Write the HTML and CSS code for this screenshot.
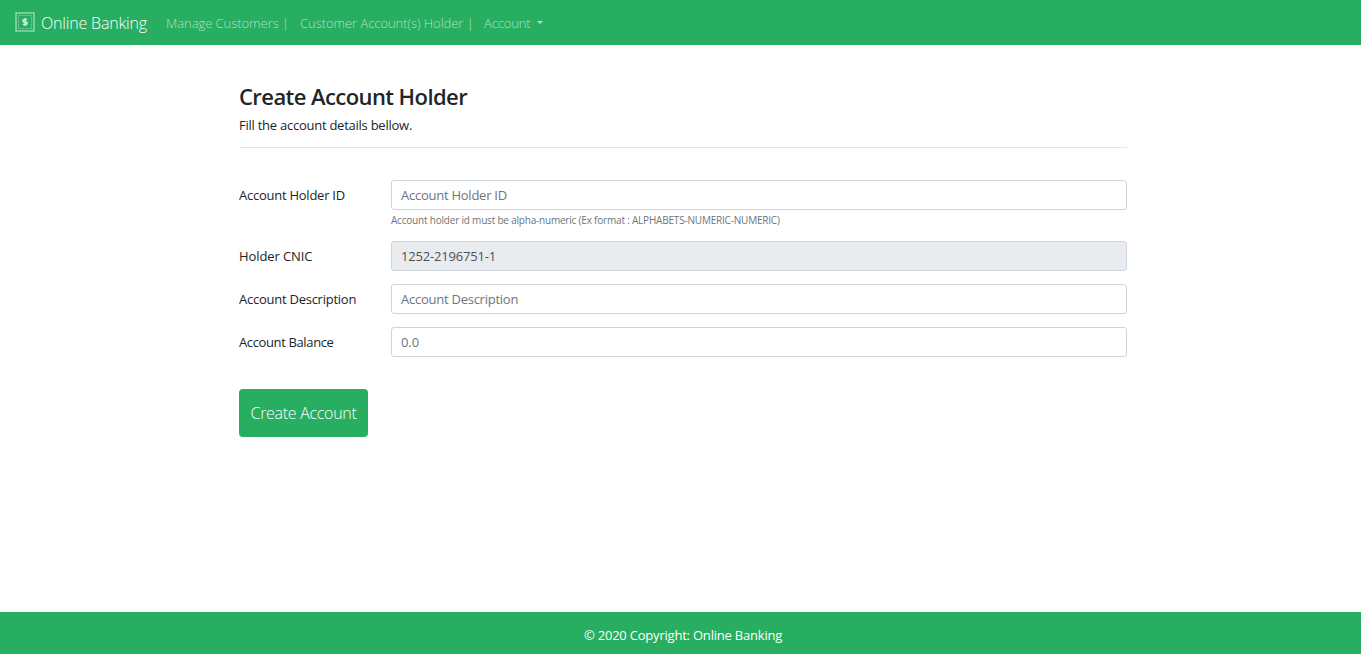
FILE: index.html
```html
<!DOCTYPE html>
<html lang="en">
<head>
<meta charset="utf-8">
<title>Online Banking</title>
<link rel="stylesheet" href="styles.css">
</head>
<body>
<nav class="navbar">
  <a class="brand"><svg class="brand-icon" viewBox="0 0 20 20" width="20" height="20"><rect class="frame" x="1" y="1" width="18" height="18"/><rect class="dashes" x="3.5" y="3.5" width="13" height="13"/><path class="dollar" d="M12.2 7.5H9.2Q8 7.5 8 8.7T9.2 10H11Q12.2 10 12.2 11.2T11 12.5H7.8M10 6v8"/></svg><span class="brand-name">Online Banking</span></a>
  <a class="nav-link manage">Manage Customers |</a>
  <a class="nav-link holder">Customer Account(s) Holder |</a>
  <a class="nav-link account">Account<i class="caret"></i></a>
</nav>
<main class="content">
  <h1 class="title">Create Account Holder</h1>
  <p class="lead">Fill the account details bellow.</p>
  <form class="form">
    <div class="row"><label class="label">Account Holder ID</label><div class="field"><div class="control">Account Holder ID</div><small class="help">Account holder id must be alpha-numeric (Ex format : ALPHABETS-NUMERIC-NUMERIC)</small></div></div>
    <div class="row"><label class="label cnic">Holder CNIC</label><div class="field"><div class="control readonly">1252-2196751-1</div></div></div>
    <div class="row"><label class="label">Account Description</label><div class="field"><div class="control">Account Description</div></div></div>
    <div class="row"><label class="label balance">Account Balance</label><div class="field"><div class="control amount">0.0</div></div></div>
    <button class="submit" type="button">Create Account</button>
  </form>
</main>
<footer class="footer">© 2020 Copyright: Online Banking</footer>
</body>
</html>
```
FILE: styles.css
```css
* { box-sizing: border-box; }
body { margin: 0; min-height: 654px; display: flex; flex-direction: column; background: #fff; color: #212529; font: 13px/20px "Open Sans", "Noto Sans", sans-serif; letter-spacing: -.25px; }
.navbar { height: 45px; padding: 0 15px; background: #28ae60; display: flex; align-items: center; color: #fff; }
.brand { display: flex; align-items: center; gap: 6px; width: 151px; font-size: 16px; font-weight: 300; letter-spacing: -.17px; }
.brand-icon { flex: none; fill: none; stroke: #b4e1c7; margin-top: -2px; }
.frame { stroke-width: 1.4; stroke: #9bd9b5; }
.dashes { stroke-width: 1; stroke-dasharray: 2 1; stroke: #79cb9b; }
.dollar { stroke-width: 1.6; stroke: #c9ecd7; }
.nav-link { color: #b0e1c4; display: flex; align-items: center; white-space: nowrap; font-weight: 300; letter-spacing: -.05px; }
.manage { width: 134px; }
.holder { width: 184px; }
.account { letter-spacing: -.15px; }
.caret { margin-left: 7px; border: 3.5px solid transparent; border-top-color: #b0e1c4; border-bottom: 0; }
.content { width: 888px; margin-left: 239px; flex: 1; padding-top: 37px; }
.title { margin: 0; font-size: 22px; line-height: 28px; font-weight: 600; letter-spacing: -.57px; }
.lead { margin: 5px 0 12px; }
.form { border-top: 1px solid #e5e5e5; padding-top: 32px; }
.row { display: flex; margin-bottom: 13px; }
.label { width: 152px; line-height: 30px; }
.cnic { letter-spacing: -.1px; }
.balance { letter-spacing: -.37px; }
.field { flex: 1; }
.control { height: 30px; border: 1px solid #ced4da; border-radius: 3px; padding: 0 9px; line-height: 28px; color: #6c757d; }
.readonly { background: #e9ecef; color: #495057; letter-spacing: -.18px; }
.amount { letter-spacing: -.1px; }
.help { display: block; height: 18px; font-size: 10px; line-height: 21px; color: #6c757d; white-space: nowrap; letter-spacing: -.2px; }
.submit { display: block; margin-top: 32px; width: 129px; height: 48px; border: 0; border-radius: 4px; background: #28ae60; color: #fff; font: 300 16px "Open Sans", sans-serif; letter-spacing: -.3px; padding: 0; white-space: nowrap; }
.footer { height: 42px; padding-left: 5px; background: #28ae60; color: #fff; text-align: center; line-height: 47px; letter-spacing: -.21px; }
```
